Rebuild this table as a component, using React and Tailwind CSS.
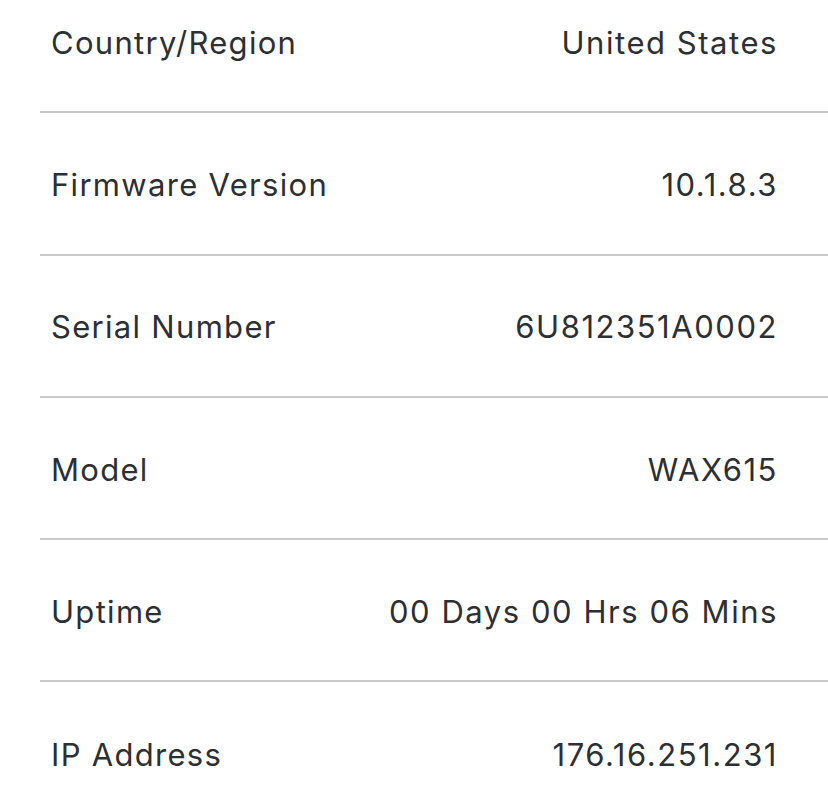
const rows = [
  ["Country/Region", "United States"],
  ["Firmware Version", "10.1.8.3"],
  ["Serial Number", "6U812351A0002"],
  ["Model", "WAX615"],
  ["Uptime", "00 Days 00 Hrs 06 Mins"],
  ["IP Address", "176.16.251.231"],
]

export default function App() {
  return (
    <div className="w-[828px] h-[800px] overflow-hidden bg-white font-['Inter','Noto_Sans',sans-serif] text-[#2c2f33]">
      <div className="pl-10 -mt-[29px]">
        {rows.map(([label, value], i) => (
          <div
            key={label}
            className={
              i < rows.length - 1
                ? "h-[142.25px] flex items-center justify-between pl-[11px] pr-[52px] pt-[4px] border-b-2 border-[#c9c9c9]"
                : "h-[142.25px] flex items-center justify-between pl-[11px] pr-[52px] pt-[4px]"
            }
          >
            <span className="text-[31px] tracking-[0.042em]">{label}</span>
            <span className="text-[31px] tracking-[0.05em] -mr-[2px]">{value}</span>
          </div>
        ))}
      </div>
    </div>
  )
}
